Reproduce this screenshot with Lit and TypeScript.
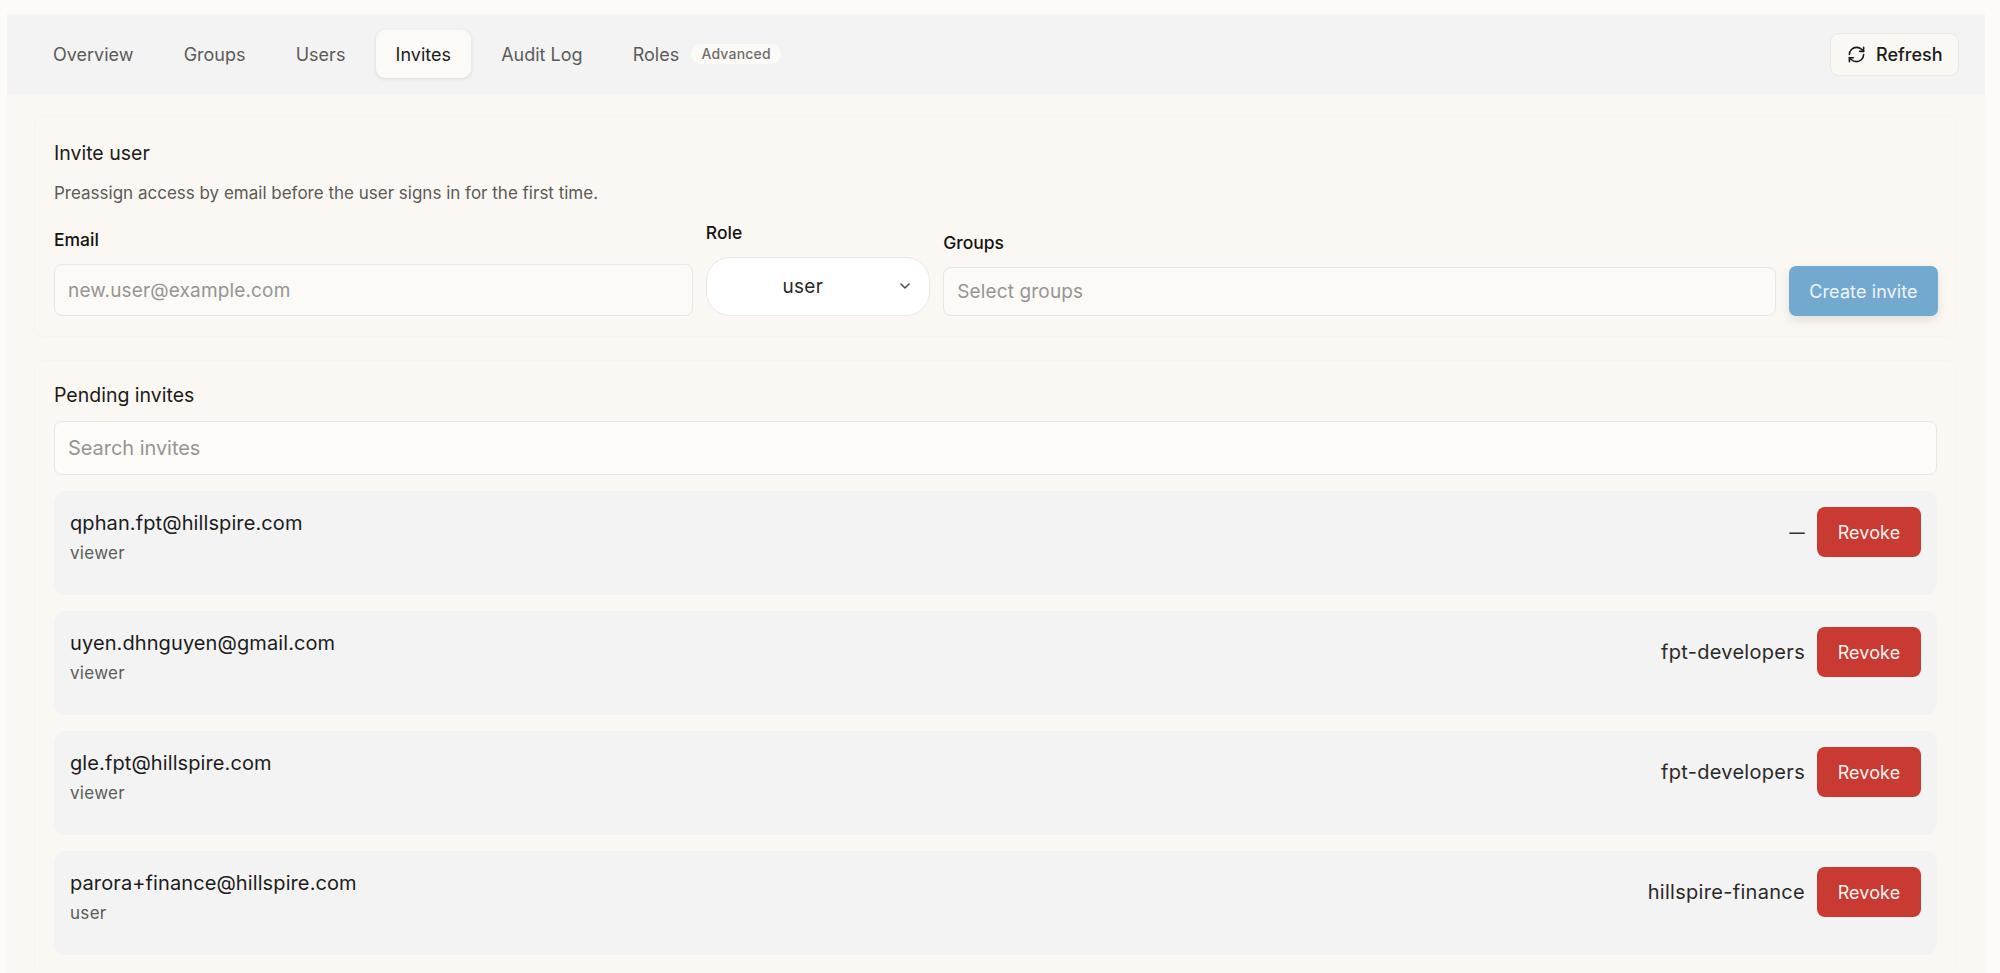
import { css, html, LitElement } from 'lit';
import { customElement } from 'lit/decorators.js';

const tabs = ['Overview', 'Groups', 'Users', 'Invites', 'Audit Log', 'Roles'];

const invites = [
    { email: 'qphan.fpt@hillspire.com', role: 'viewer', groups: '—' },
    { email: 'uyen.dhnguyen@gmail.com', role: 'viewer', groups: 'fpt-developers' },
    { email: 'gle.fpt@hillspire.com', role: 'viewer', groups: 'fpt-developers' },
    { email: 'parora+finance@hillspire.com', role: 'user', groups: 'hillspire-finance' },
];

@customElement('app-root')
export class AppRoot extends LitElement
{
    protected render(): unknown
    {
        return html`
<div class="panel">
    <header class="topbar">
        <nav class="tabs">
            ${tabs.map((t) => html`
                <span class="tab ${t === 'Invites' ? 'active' : ''}">${t}</span>
                ${t === 'Roles' ? html`<span class="pill">Advanced</span>` : ''}
            `)}
        </nav>
        <button class="refresh">
            <svg width="19" height="19" viewBox="0 0 24 24" fill="none" stroke="currentColor" stroke-width="2" stroke-linecap="round" stroke-linejoin="round">
                <path d="M3 12a9 9 0 0 1 9-9 9.75 9.75 0 0 1 6.74 2.74L21 8"></path>
                <path d="M21 3v5h-5"></path>
                <path d="M21 12a9 9 0 0 1-9 9 9.75 9.75 0 0 1-6.74-2.74L3 16"></path>
                <path d="M8 16H3v5"></path>
            </svg>
            Refresh
        </button>
    </header>

    <section class="card first">
        <h2>Invite user</h2>
        <p class="desc">Preassign access by email before the user signs in for the first time.</p>
        <div class="form">
            <label class="field">
                <span>Email</span>
                <input class="email" placeholder="new.user@example.com" />
            </label>
            <div class="field">
                <span>Role</span>
                <div class="select">
                    user
                    <svg class="chev" width="16" height="16" viewBox="0 0 24 24" fill="none" stroke="currentColor" stroke-width="2.2" stroke-linecap="round" stroke-linejoin="round">
                        <path d="m6 9 6 6 6-6"></path>
                    </svg>
                </div>
            </div>
            <label class="field">
                <span>Groups</span>
                <input class="groups" placeholder="Select groups" />
            </label>
            <button class="create">Create invite</button>
        </div>
    </section>

    <section class="card second">
        <h2>Pending invites</h2>
        <input class="search" placeholder="Search invites" />
        <div class="list">
            ${invites.map((i) => html`
                <div class="row">
                    <div class="who">
                        <div class="mail">${i.email}</div>
                        <div class="role">${i.role}</div>
                    </div>
                    <div class="right">
                        <span class="grp ${i.groups === '—' ? 'dash' : ''}">${i.groups}</span>
                        <button class="revoke">Revoke</button>
                    </div>
                </div>
            `)}
        </div>
    </section>
</div>
`;
    }

    static get styles()
    {
        return css`
:host {
    display: block;
    height: 100vh;
    overflow: hidden;
    box-sizing: border-box;
    padding: 14px 15px 0 7px;
    background: #fdfbf8;
    font-family: Inter, "Open Sans", sans-serif;
    color: #1c1b1a;
}

* {
    box-sizing: border-box;
}

.panel {
    background: #fbf8f3;
    height: 100%;
    display: flex;
    flex-direction: column;
    overflow: hidden;
}

.topbar {
    height: 80px;
    flex: none;
    display: flex;
    align-items: center;
    justify-content: space-between;
    padding: 0 26px 0 26px;
    background: #f3f3f4;
}

.tabs {
    display: flex;
    align-items: center;
    gap: 10.2px;
}

.tab {
    display: flex;
    align-items: center;
    height: 48px;
    padding: 0 20px;
    border-radius: 9px;
    font-size: 18px;
    color: #5c5a57;
}

.tab.active {
    background: #fcfaf6;
    color: #1c1b1a;
    box-shadow: 0 1px 4px rgba(0, 0, 0, 0.1);
}

.pill {
    margin-left: -18px;
    padding: 0 10px;
    height: 20px;
    line-height: 20px;
    border-radius: 10px;
    background: #fcfaf6;
    font-size: 14px;
    font-weight: 500;
    letter-spacing: 0.2px;
    color: #6f6d6a;
}

.refresh {
    display: flex;
    align-items: center;
    gap: 10px;
    width: 129px;
    height: 43px;
    padding: 0 0 0 16px;
    background: #faf8f3;
    border: 1px solid #ebe9e5;
    border-radius: 9px;
    font: 450 18px Inter, sans-serif;
    color: #1c1b1a;
}

.card {
    margin: 21px 28px 0 27px;
    padding: 23px 19px 20px;
    border: 1px solid #f8f5ef;
    border-radius: 10px;
    flex: none;
}

.card.second {
    margin-top: 23px;
    padding-top: 20px;
}

h2 {
    margin: 0;
    font-size: 19.5px;
    line-height: 28px;
    font-weight: 400;
    color: #1c1b1a;
}

.desc {
    margin: 14px 0 0;
    font-size: 17px;
    line-height: 24px;
    color: #5c5a57;
}

.form {
    margin: 16px -1px 0 0;
    display: grid;
    grid-template-columns: 638.5px 224px 1fr 149px;
    column-gap: 13.33px;
    align-items: end;
}

.field {
    display: flex;
    flex-direction: column;
    gap: 12px;
}

.field > span {
    font-size: 17.5px;
    line-height: 24px;
    font-weight: 500;
    color: #141312;
}

input {
    width: 100%;
    padding: 0 13px;
    background: #fcfaf6;
    border: 1px solid #e9e7e2;
    border-radius: 8px;
    font: 400 19px Inter, sans-serif;
    letter-spacing: 0.15px;
    color: #1c1b1a;
    outline: none;
}

input::placeholder {
    color: #979593;
    opacity: 1;
}

.email {
    height: 52px;
}

.groups {
    height: 49px;
}

.select {
    position: relative;
    height: 59px;
    display: flex;
    align-items: center;
    justify-content: center;
    padding-right: 30px;
    background: #fff;
    border: 1px solid #ebe9e5;
    border-radius: 24px;
    font-size: 19px;
    letter-spacing: 0.3px;
    color: #2a2927;
}

.chev {
    position: absolute;
    right: 16px;
    top: 20px;
    color: #4a4947;
}

.create {
    height: 50px;
    border: none;
    border-radius: 7px;
    background: #74a9cf;
    color: #eef4f7;
    font: 400 18px Inter, sans-serif;
    letter-spacing: 0.1px;
    box-shadow: 0 4px 10px rgba(60, 90, 110, 0.15);
}

.search {
    display: block;
    height: 54px;
    margin-top: 12px;
    padding-left: 13px;
    background: #fdfcf8;
    font-size: 20px;
    letter-spacing: -0.05px;
}

.list {
    margin-top: 16px;
    display: flex;
    flex-direction: column;
    gap: 16px;
}

.row {
    display: flex;
    justify-content: space-between;
    align-items: flex-start;
    height: 104px;
    padding: 16px;
    background: #f3f3f4;
    border-radius: 12px;
}

.mail {
    font-size: 20px;
    line-height: 32px;
    letter-spacing: 0.1px;
    color: #1c1b1a;
}

.role {
    margin-top: 3px;
    font-size: 17px;
    line-height: 22px;
    letter-spacing: 0.3px;
    color: #5c5a57;
}

.right {
    display: flex;
    align-items: center;
    gap: 12px;
}

.grp {
    font-size: 20px;
    letter-spacing: 0.3px;
    color: #2a2927;
}

.grp.dash {
    font-size: 15.5px;
    font-weight: 500;
    color: #33322f;
}

.revoke {
    width: 104px;
    height: 50px;
    border: none;
    border-radius: 8px;
    background: #c93a32;
    color: #fdf3f0;
    font: 400 18px Inter, sans-serif;
    letter-spacing: 0.1px;
}
`;
    }
}
